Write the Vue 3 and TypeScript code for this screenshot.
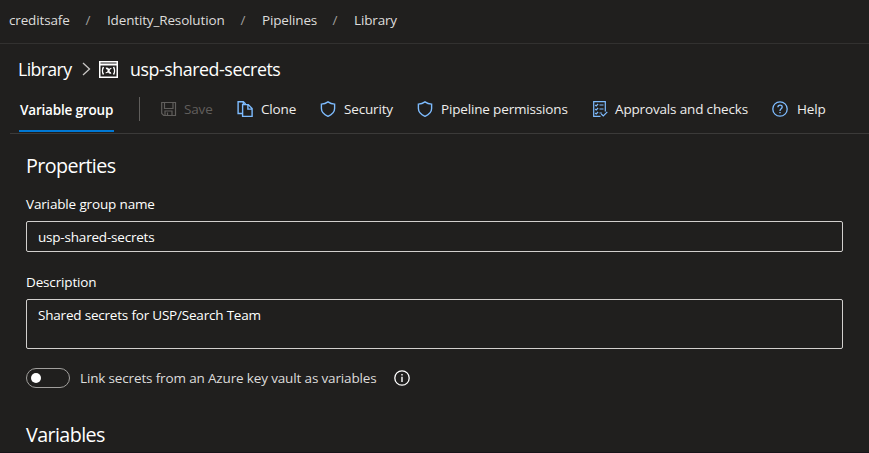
<script setup lang="ts">
import { ref } from 'vue'

interface Action {
  label: string
  icon: 'save' | 'clone' | 'shield' | 'checklist' | 'help'
  key: string
  disabled?: boolean
}

const crumbs = [
  { label: 'creditsafe', key: 'org' },
  { label: 'Identity_Resolution', key: 'project' },
  { label: 'Pipelines', key: 'area' },
  { label: 'Library', key: 'page' },
]

const actions: Action[] = [
  { label: 'Save', icon: 'save', key: 'save', disabled: true },
  { label: 'Clone', icon: 'clone', key: 'clone' },
  { label: 'Security', icon: 'shield', key: 'security' },
  { label: 'Pipeline permissions', icon: 'shield', key: 'permissions' },
  { label: 'Approvals and checks', icon: 'checklist', key: 'approvals' },
  { label: 'Help', icon: 'help', key: 'help' },
]

const groupName = ref('usp-shared-secrets')
const description = ref('Shared secrets for USP/Search Team')
const linked = ref(false)
</script>

<template>
  <div class="page">
    <nav class="crumbs">
      <template v-for="(c, i) in crumbs" :key="c.key">
        <span v-if="i > 0" class="slash">/</span>
        <span class="crumb" :class="'crumb-' + c.key">{{ c.label }}</span>
      </template>
    </nav>

    <header class="title">
      <span class="title-root">Library</span>
      <svg class="chevron" width="9" height="14" viewBox="0 0 9 14"><path d="M1 1l6.500 6L1 13" fill="none" stroke="currentColor" stroke-width="1.300" /></svg>
      <svg class="group-icon" width="19" height="17" viewBox="0 0 19 17" fill="none" stroke="#fff">
        <rect x=".75" y=".75" width="17.500" height="15.500" stroke-width="1.500" />
        <path d="M1 3.500h17" stroke-width="2" />
        <path d="M4.500 6C3.200 8 3.200 11.500 4.500 13.500M14.500 6c1.300 2 1.300 5.500 0 7.500" stroke-width="1.500" />
        <path d="M7 7.600c1.500-.8 2.200.3 2.600 2.100.4 1.900 1 2.700 2.400 1.900" stroke-width="1.800" />
        <path d="M12.400 7.500c-1.300-.3-2.200 1.100-2.800 2.200-.7 1.300-1.400 2.400-2.900 2" stroke-width="1.200" />
      </svg>
      <span class="title-name">usp-shared-secrets</span>
    </header>

    <div class="toolbar">
      <span class="tab">Variable group</span>
      <span class="divider"></span>
      <button v-for="a in actions" :key="a.key" class="action" :class="'action-' + a.key" :disabled="a.disabled">
        <svg width="16" height="16" viewBox="0 0 16 16" fill="none" stroke="currentColor" stroke-width="1.200">
          <template v-if="a.icon === 'save'">
            <path d="M.7 1.500h13.800v13H2.700l-2-2zM3.500 1.500v6h8.500v-6M4 14.500V10h7v4.500M6.500 11.500v3" />
          </template>
          <template v-else-if="a.icon === 'clone'">
            <path d="M5.500 12.500H1.100V.7h5.200l2.300 2.400M6.300.7v2.800M5.600 3.600h5.700l3.800 4v7.800H5.600zM10.900 3.900v4.200h4" stroke-width="1.400" />
          </template>
          <template v-else-if="a.icon === 'shield'">
            <path d="M8 .9c2 1.500 4.200 2.200 6.600 2.200v4.500c0 3.500-2.600 6-6.600 7.700-4-1.700-6.600-4.200-6.600-7.700V3.100C3.800 3.100 6 2.400 8 .9z" stroke-width="1.400" />
          </template>
          <template v-else-if="a.icon === 'checklist'">
            <path d="M8.500 15.300H1.700V.7h11.600v9.800M7.500 4h4M7.500 8h4M7.500 12h2.300M3.200 4l1 1 1.900-2M3.200 8l1 1 1.900-2M3.200 12l1 1 1.900-2M9.300 13l2 2 4-4.200" />
          </template>
          <template v-else>
            <circle cx="8" cy="8" r="7.200" stroke-width="1.300" />
            <path d="M5.900 6.200C5.900 3.300 10.200 3.400 10.200 6c0 1.800-2.200 1.800-2.200 3.900M8 11v1.300" stroke-width="1.300" />
          </template>
        </svg>
        <span>{{ a.label }}</span>
      </button>
    </div>

    <main class="content">
      <h2 class="heading properties">Properties</h2>
      <label class="label label-name" for="group-name">Variable group name</label>
      <input id="group-name" v-model="groupName" class="field name-field" />
      <label class="label label-desc" for="group-desc">Description</label>
      <textarea id="group-desc" v-model="description" class="field desc-field"></textarea>
      <div class="link-row">
        <button class="toggle" role="switch" :aria-checked="linked" :class="{ on: linked }" @click="linked = !linked"><span class="knob"></span></button>
        <span class="link-text">Link secrets from an Azure key vault as variables</span>
        <svg class="info" width="16" height="16" viewBox="0 0 16 16" fill="none" stroke="#fff">
          <circle cx="8" cy="8" r="7.200" stroke-width="1.300" />
          <path d="M8 4v1.500M8 6.700V12" stroke-width="1.400" />
        </svg>
      </div>
      <h2 class="heading variables">Variables</h2>
    </main>
  </div>
</template>

<style>
body {
  background: #201f1e;
  overflow: hidden;
}
</style>

<style scoped>
.page {
  box-sizing: border-box;
  height: 453px;
  overflow: hidden;
  background: #201f1e;
  border-bottom: 1px solid #171419;
  color: #fff;
  font: 13.500px/20px "Segoe UI", "Open Sans", "Noto Sans", sans-serif;
  letter-spacing: -0.150px;
  white-space: nowrap;
}
.crumbs {
  display: flex;
  box-sizing: border-box;
  height: 44px;
  padding: 10px 0 0 9px;
  border-bottom: 1px solid #323130;
  color: #dddcdb;
}
.slash {
  width: 38px;
  text-align: center;
  color: #a19f9d;
}
.crumb-org { width: 60px; }
.crumb-project { width: 117px; }
.crumb-area { width: 54px; }
.title {
  display: flex;
  align-items: center;
  height: 50px;
  padding-left: 18px;
  font-size: 17.800px;
  letter-spacing: -0.430px;
}
.title-root {
  width: 64px;
  letter-spacing: -0.650px;
}
.chevron { color: #c8c6c4; }
.group-icon { margin-left: 8px; }
.title-name { margin-left: 12px; }
.toolbar {
  display: flex;
  box-sizing: border-box;
  height: 40px;
  margin-left: 10px;
  padding-left: 9px;
  border-bottom: 1px solid #3b3a39;
}
.tab {
  box-sizing: border-box;
  width: 95px;
  height: 38px;
  padding: 6px 0 0 1px;
  border-bottom: 2px solid #0078d4;
  font-weight: 600;
  letter-spacing: -0.180px;
}
.divider {
  width: 1px;
  height: 24px;
  margin: 3px 21px 0 25px;
  background: #605e5c;
}
.action {
  display: flex;
  align-items: center;
  gap: 8px;
  height: 30px;
  margin: 0;
  padding: 0;
  border: 0;
  background: none;
  color: #eeedec;
  font: inherit;
  letter-spacing: -0.160px;
}
.action svg {
  flex: none;
  color: #7ebcff;
}
.action:disabled { color: #605e5c; }
.action:disabled svg { color: #605e5c; }
.action-save {
  gap: 7px;
  width: 76px;
}
.action-clone { width: 83px; }
.action-security { width: 97px; }
.action-permissions { width: 175px; }
.action-approvals {
  gap: 7px;
  width: 180px;
}
.action-help { gap: 9px; }
.content {
  display: flex;
  flex-direction: column;
  align-items: flex-start;
  padding: 18px 26px 0;
}
.heading {
  margin: 0;
  font-size: 19.700px;
  font-weight: 400;
  line-height: 28px;
  letter-spacing: -0.580px;
}
.label { margin-top: 14px; }
.label-desc { margin-top: 20px; }
.field {
  box-sizing: border-box;
  width: 817px;
  margin: 7px 0 0;
  padding: 5px 11px;
  border: 1px solid #d2d0ce;
  border-radius: 2px;
  outline: 0;
  background: transparent;
  color: #fff;
  font: inherit;
  letter-spacing: -0.200px;
  resize: none;
}
.name-field { height: 31px; }
.desc-field { height: 50px; overflow: hidden; }
.link-row {
  display: flex;
  align-items: center;
  margin-top: 19px;
}
.toggle {
  display: flex;
  box-sizing: border-box;
  align-items: center;
  width: 44px;
  height: 20px;
  padding: 0 4px;
  border: 1px solid #a19f9d;
  border-radius: 10px;
  background: none;
}
.toggle.on { justify-content: flex-end; }
.knob {
  width: 10px;
  height: 10px;
  border-radius: 50%;
  background: #fff;
}
.link-text {
  width: 304px;
  margin-left: 10px;
  color: #dddcdb;
}
.info { margin-left: 10px; }
.variables { margin-top: 33px; }
</style>
